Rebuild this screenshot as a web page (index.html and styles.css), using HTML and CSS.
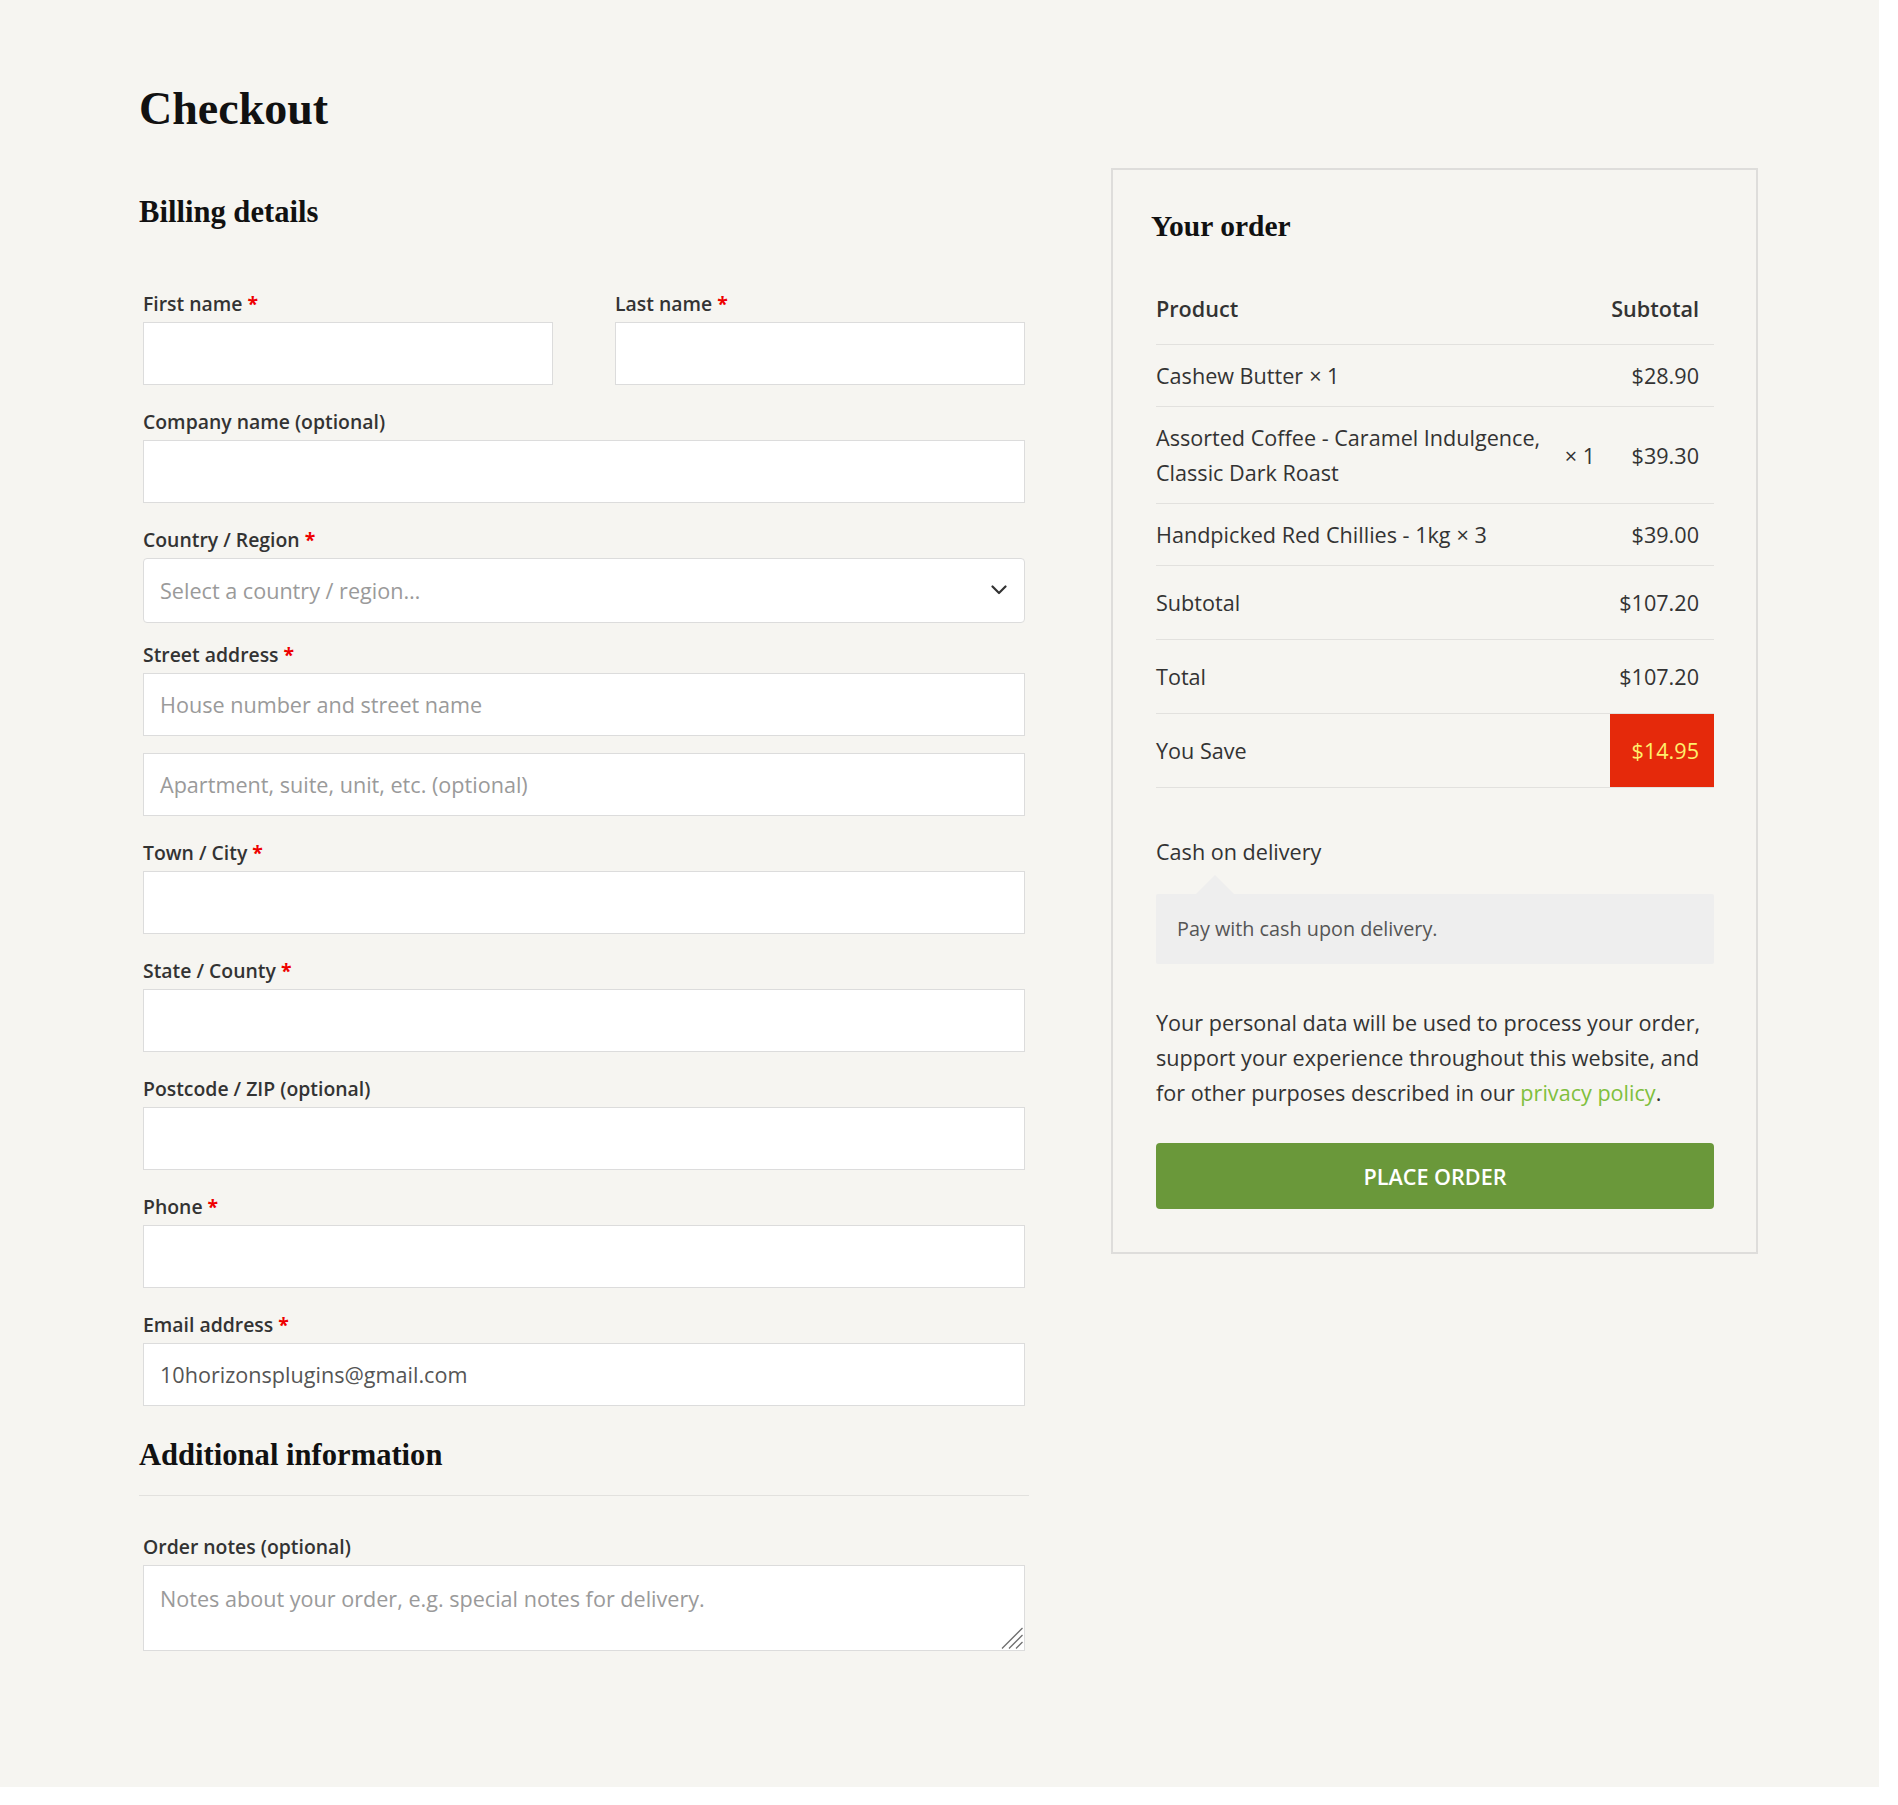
FILE: index.html
```html
<!DOCTYPE html>
<html lang="en">
<head>
<meta charset="utf-8">
<title>Checkout</title>
<link rel="stylesheet" href="styles.css">
</head>
<body>
<div class="page">
  <h1 class="page-title">Checkout</h1>
  <div class="checkout">
    <div class="col-billing">
      <h3 class="section-title">Billing details</h3>
      <div class="fields">
        <div class="row-half">
          <div class="field">
            <label class="label">First name <abbr class="req">*</abbr></label>
            <div class="input"></div>
          </div>
          <div class="field">
            <label class="label">Last name <abbr class="req">*</abbr></label>
            <div class="input"></div>
          </div>
        </div>
        <div class="field">
          <label class="label">Company name (optional)</label>
          <div class="input"></div>
        </div>
        <div class="field field-select">
          <label class="label">Country / Region <abbr class="req">*</abbr></label>
          <div class="input select">
            <span class="placeholder">Select a country / region…</span>
            <svg class="chevron" width="16" height="10" viewBox="0 0 16 10"><polyline points="1.5,1.5 8,8 14.5,1.5" fill="none" stroke="#333" stroke-width="2.2" stroke-linecap="round" stroke-linejoin="round"/></svg>
          </div>
        </div>
        <div class="field tight">
          <label class="label">Street address <abbr class="req">*</abbr></label>
          <div class="input"><span class="placeholder">House number and street name</span></div>
        </div>
        <div class="field">
          <div class="input"><span class="placeholder">Apartment, suite, unit, etc. (optional)</span></div>
        </div>
        <div class="field">
          <label class="label">Town / City <abbr class="req">*</abbr></label>
          <div class="input"></div>
        </div>
        <div class="field">
          <label class="label">State / County <abbr class="req">*</abbr></label>
          <div class="input"></div>
        </div>
        <div class="field">
          <label class="label">Postcode / ZIP (optional)</label>
          <div class="input"></div>
        </div>
        <div class="field">
          <label class="label">Phone <abbr class="req">*</abbr></label>
          <div class="input"></div>
        </div>
        <div class="field">
          <label class="label">Email address <abbr class="req">*</abbr></label>
          <div class="input"><span class="value">10horizonsplugins@gmail.com</span></div>
        </div>
      </div>
      <h3 class="section-title additional">Additional information</h3>
      <div class="field notes">
        <label class="label">Order notes (optional)</label>
        <div class="textarea-wrap">
          <textarea class="textarea" placeholder="Notes about your order, e.g. special notes for delivery."></textarea>
          <svg class="resizer" width="22" height="22" viewBox="0 0 22 22"><path d="M1 21.5 L21.5 1 M8 21.5 L21.5 8 M15 21.5 L21.5 15" fill="none" stroke="#6f6f6f" stroke-width="1.3"/></svg>
        </div>
      </div>
    </div>

    <div class="order-box">
      <h3 class="order-title">Your order</h3>
      <table class="order-table">
        <thead>
          <tr><th class="c-name">Product</th><th class="c-total">Subtotal</th></tr>
        </thead>
        <tbody>
          <tr><td class="c-name"><div class="item"><span class="item-name">Cashew Butter</span><span class="qty">× 1</span></div></td><td class="c-total">$28.90</td></tr>
          <tr><td class="c-name"><div class="item"><span class="item-name">Assorted Coffee - Caramel Indulgence, Classic Dark Roast</span><span class="qty">× 1</span></div></td><td class="c-total">$39.30</td></tr>
          <tr><td class="c-name"><div class="item"><span class="item-name">Handpicked Red Chillies - 1kg</span><span class="qty">× 3</span></div></td><td class="c-total">$39.00</td></tr>
        </tbody>
        <tfoot>
          <tr><td class="c-name">Subtotal</td><td class="c-total">$107.20</td></tr>
          <tr><td class="c-name">Total</td><td class="c-total">$107.20</td></tr>
          <tr><td class="c-name">You Save</td><td class="c-total save">$14.95</td></tr>
        </tfoot>
      </table>
      <div class="payment">
        <div class="method">Cash on delivery</div>
        <div class="pay-box">Pay with cash upon delivery.</div>
      </div>
      <p class="privacy">Your personal data will be used to process your order, support your experience throughout this website, and for other purposes described in our <a class="link" href="#">privacy policy</a>.</p>
      <button class="place-order" type="button">PLACE ORDER</button>
    </div>
  </div>
</div>
</body>
</html>
```

FILE: styles.css
```css
html {
  background: #ffffff;
}
body {
  margin: 0;
  font-family: "Open Sans", "Liberation Sans", sans-serif;
  color: #333333;
}
.page {
  width: 1879px;
  min-height: 1787px;
  box-sizing: border-box;
  background: #f6f5f1;
  padding: 81px 0 0 139px;
}
.page-title {
  margin: 0;
  font-family: "Liberation Serif", serif;
  font-weight: 700;
  font-size: 46px;
  line-height: 1.2;
  color: #111111;
}
.checkout {
  margin-top: 32px;
  display: flex;
  align-items: flex-start;
  gap: 82px;
}
.col-billing {
  width: 890px;
}
.section-title {
  margin: 26px 0 0;
  font-family: "Liberation Serif", serif;
  font-weight: 700;
  font-size: 30.6px;
  line-height: 36.7px;
  color: #111111;
}
.fields {
  margin-top: 59px;
}
.row-half {
  display: flex;
  justify-content: space-between;
}
.field {
  padding: 0 4px;
  margin-bottom: 23px;
}
.row-half .field {
  width: 418px;
  box-sizing: border-box;
}
.field.field-select {
  margin-bottom: 18px;
}
.field.tight {
  margin-bottom: 17px;
}
.label {
  display: block;
  font-size: 19.4px;
  font-weight: 600;
  line-height: 28px;
  margin-bottom: 4px;
  color: #333333;
}
.req {
  color: #ee0000;
  text-decoration: none;
  font-weight: 700;
}
.input {
  height: 63px;
  box-sizing: border-box;
  background: #ffffff;
  border: 1px solid #dcdcdc;
  padding: 0 16px;
  display: flex;
  align-items: center;
  font-size: 21.6px;
}
.select {
  height: 65px;
  border-radius: 4px;
  justify-content: space-between;
}
.chevron {
  margin-right: 1px;
}
.placeholder {
  color: #9a9a9a;
}
.value {
  color: #555555;
}
.section-title.additional {
  margin-top: 31.5px;
  padding-bottom: 21px;
  border-bottom: 1px solid #e2e1de;
}
.field.notes {
  margin-top: 37px;
}
.textarea-wrap {
  position: relative;
}
.textarea {
  display: block;
  width: 100%;
  height: 86px;
  box-sizing: border-box;
  margin: 0;
  border: 1px solid #dcdcdc;
  border-radius: 0;
  background: #ffffff;
  padding: 18px 16px;
  font-family: "Open Sans", "Liberation Sans", sans-serif;
  font-size: 21.6px;
  line-height: 30px;
  color: #555555;
  resize: none;
}
.textarea::placeholder {
  color: #9a9a9a;
}
.resizer {
  position: absolute;
  right: 2px;
  bottom: 2px;
  pointer-events: none;
}

/* order box */
.order-box {
  width: 647px;
  box-sizing: border-box;
  border: 2px solid #dedddb;
  padding: 39px 42px 43px 43px;
}
.order-title {
  margin: 0 0 39px -5px;
  font-family: "Liberation Serif", serif;
  font-weight: 700;
  font-size: 29.5px;
  line-height: 35px;
  color: #111111;
}
.order-table {
  width: 100%;
  border-collapse: collapse;
  font-size: 21.6px;
  line-height: 35px;
}
.order-table th,
.order-table td {
  padding: 13px 15px 13px 0;
  border-bottom: 1px solid #e2e1de;
  vertical-align: middle;
  text-align: left;
}
.order-table th {
  font-weight: 600;
  padding-top: 8px;
  padding-bottom: 18px;
}
.order-table .c-total {
  text-align: right;
  width: 89px;
}
.order-table tfoot td {
  padding-top: 19px;
  padding-bottom: 19px;
}
.item {
  display: flex;
  align-items: center;
}
.item-name {
  flex: 0 1 auto;
}
.qty {
  flex: 0 0 auto;
  margin-left: 6px;
  white-space: nowrap;
}
.order-table td.save {
  background: #e5290b;
  color: #fff06c;
}
.payment {
  margin-top: 46px;
}
.method {
  font-size: 21.6px;
  line-height: 35px;
}
.pay-box {
  position: relative;
  margin-top: 25px;
  background: #eeeeee;
  border-radius: 2px;
  padding: 21px 21px;
  font-size: 19.8px;
  line-height: 28px;
  color: #555555;
}
.pay-box::before {
  content: "";
  position: absolute;
  top: -19px;
  left: 40px;
  border-style: solid;
  border-width: 0 19.5px 19px 19.5px;
  border-color: transparent transparent #eeeeee transparent;
}
.privacy {
  margin: 41px 0 0;
  font-size: 21.6px;
  line-height: 35px;
  color: #333333;
}
.link {
  color: #7fbf3d;
  text-decoration: none;
}
.place-order {
  display: block;
  width: 100%;
  height: 66px;
  margin-top: 33px;
  border: 0;
  border-radius: 4px;
  background: #6a983a;
  color: #ffffff;
  font-family: "Open Sans", "Liberation Sans", sans-serif;
  font-size: 21.6px;
  font-weight: 600;
}
```
